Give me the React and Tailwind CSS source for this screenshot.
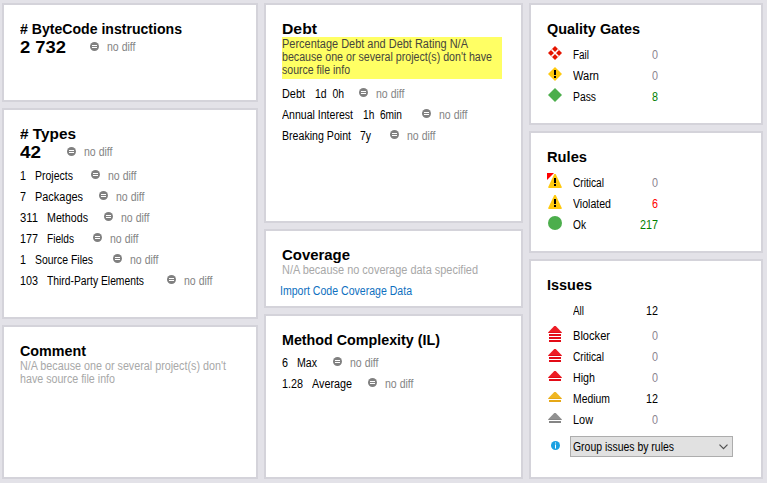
import { useLayoutEffect, useRef } from "react";

const body = "font-['Liberation_Sans',Arial,sans-serif] text-[12px]";

// Condenses or widens one line so that it fills the width of its cell.
function Fit({ className = "", children }) {
  const cell = useRef(null);
  const text = useRef(null);
  useLayoutEffect(() => {
    text.current.style.transform = "none";
    const room = cell.current.getBoundingClientRect().width;
    const natural = text.current.getBoundingClientRect().width;
    text.current.style.transform = `scaleX(${room / natural})`;
  }, [children]);
  return (
    <span ref={cell} className={`flex shrink-0 whitespace-pre ${className}`}>
      <span ref={text} className="block shrink-0 origin-left">{children}</span>
    </span>
  );
}

function Card({ title, titleWidth, className, children }) {
  return (
    <section className={`border-2 border-[#d4d3da] bg-white pl-4 pt-[14px] ${className}`}>
      <h2 className="h-[18px] text-[14.5px] font-bold leading-5 text-black">
        <Fit className={titleWidth}>{title}</Fit>
      </h2>
      {children}
    </section>
  );
}

function NoDiff({ className }) {
  return (
    <span className={`flex shrink-0 ${className}`}>
      <svg className="mt-[5px] h-[9px] w-[9px]" viewBox="0 0 9 9">
        <circle cx="4.5" cy="4.5" r="4.5" fill="#808080" />
        <path d="M2 3.5h5M2 5.5h5" stroke="#fff" />
      </svg>
      <Fit className={`ml-2 w-[28.5px] text-[#858585] ${body}`}>no diff</Fit>
    </span>
  );
}

function Metric({ first, firstClass, second, secondClass, diffClass }) {
  return (
    <div className={`flex h-[21px] leading-[23px] text-black ${body}`}>
      <Fit className={firstClass}>{first}</Fit>
      <Fit className={secondClass}>{second}</Fit>
      <NoDiff className={diffClass} />
    </div>
  );
}

function Total({ value, valueClass, diffClass }) {
  return (
    <div className="flex h-5 leading-5">
      <Fit className={`text-[16.5px] font-bold leading-[21px] text-black ${valueClass}`}>{value}</Fit>
      <NoDiff className={diffClass} />
    </div>
  );
}

function Status({ icon, label, labelClass, value, valueClass }) {
  return (
    <div className={`flex h-[21px] leading-[23px] text-black ${body}`}>
      <span className="w-[26px] shrink-0">{icon}</span>
      <span className="w-[66px] shrink-0">
        <Fit className={labelClass}>{label}</Fit>
      </span>
      <span className="flex w-[19px] shrink-0 justify-end">
        <Fit className={valueClass}>{value}</Fit>
      </span>
    </div>
  );
}

function Diamond({ kind }) {
  const fill = kind === "pass" ? "#4cae4c" : kind === "warn" ? "#ffc90e" : "#e51400";
  return (
    <svg className="ml-px mt-0.5 h-[14px] w-[14px]" viewBox="0 0 14 14">
      <path d="M7 0L14 7L7 14L0 7Z" fill={fill} />
      {kind === "fail" && (
        <path d="M3.5 3.5l7 7M10.5 3.5l-7 7" stroke="#fff" strokeWidth="1.6" />
      )}
      {kind === "warn" && <path d="M6 3h2v5h-2zM6 9h2v2h-2z" fill="#000" />}
    </svg>
  );
}

function Warning({ critical }) {
  return (
    <svg className="mt-px h-[15px] w-[15px]" viewBox="0 0 15 15">
      {critical && <path d="M0 0h7L0 7z" fill="#f00" />}
      <path d="M7.3 1h1.4L14.8 14q.2 1-.8 1H2q-1 0-.8-1z" fill="#ffc90e" />
      <path d="M7 5h2v5h-2zM7 11h2v2h-2z" fill="#000" />
    </svg>
  );
}

function Severity({ bars, className, fill, light }) {
  const height = 7 + bars * 3;
  return (
    <svg className={`w-[14px] ${className}`} height={height} viewBox={`0 0 14 ${height}`}>
      <path d="M6.3 0h1.4L13.5 6v1h-13v-1z" fill={light} />
      <path d="M0.5 6h13v1h-13z" fill={fill} />
      {Array.from({ length: bars }, (_, i) => (
        <rect key={i} x="1" y={8 + i * 3} width="12" height="2" fill={fill} />
      ))}
    </svg>
  );
}

const zero = "w-[6px] text-[#8c8490]";

export default function App() {
  return (
    <main className="flex h-[483px] w-[767px] gap-[6px] overflow-hidden bg-[#e3e2e8] pl-0.5 pt-[3px] font-['Liberation_Sans',Arial,sans-serif]">
      <div className="flex w-[256px] flex-col gap-[6px]">
        <Card title="# ByteCode instructions" titleWidth="w-[162px]" className="h-[99px]">
          <Total value="2 732" valueClass="w-[46px]" diffClass="ml-6" />
        </Card>
        <Card title="# Types" titleWidth="w-[56px]" className="h-[211px]">
          <Total value="42" valueClass="w-[21px]" diffClass="ml-[26px]" />
          <div className="mt-[3px]">
            <Metric first="1" firstClass="w-[6px]" second="Projects" secondClass="ml-[9px] w-[38px]" diffClass="ml-[18px]" />
            <Metric first="7" firstClass="w-[6px]" second="Packages" secondClass="ml-[9px] w-[48px]" diffClass="ml-4" />
            <Metric first="311" firstClass="w-[18px]" second="Methods" secondClass="ml-[9px] w-[41px]" diffClass="ml-4" />
            <Metric first="177" firstClass="w-[18px]" second="Fields" secondClass="ml-[9px] w-[27px]" diffClass="ml-[19px]" />
            <Metric first="1" firstClass="w-[6px]" second="Source Files" secondClass="ml-[9px] w-[58px]" diffClass="ml-5" />
            <Metric first="103" firstClass="w-[18px]" second="Third-Party Elements" secondClass="ml-[9px] w-[97px]" diffClass="ml-[23px]" />
          </div>
        </Card>
        <Card title="Comment" titleWidth="w-[66px]" className="h-[154px]">
          <div className={`pt-px leading-[13px] text-[#a8a8a8] ${body}`}>
            <Fit className="w-[206px]">N/A because one or several project(s) don't</Fit>
            <Fit className="w-[95px]">have source file info</Fit>
          </div>
        </Card>
      </div>

      <div className="flex w-[259px] flex-col gap-[6px]">
        <Card title="Debt" titleWidth="w-[35px]" className="h-[220px]">
          <div className={`h-[42px] w-[220px] bg-[#ffff64] pt-px leading-[13px] text-[#46463c] ${body}`}>
            <Fit className="w-[186px]">Percentage Debt and Debt Rating N/A</Fit>
            <Fit className="w-[210px]">because one or several project(s) don't have</Fit>
            <Fit className="w-[68px]">source file info</Fit>
          </div>
          <div className="mt-1">
            <Metric first="Debt" firstClass="w-[23px]" second="1d  0h" secondClass="ml-[10px] w-[29px]" diffClass="ml-[15px]" />
            <Metric first="Annual Interest" firstClass="w-[71px]" second="1h  6min" secondClass="ml-[10px] w-[39px]" diffClass="ml-5" />
            <Metric first="Breaking Point" firstClass="w-[69px]" second="7y" secondClass="ml-[9px] w-[11px]" diffClass="ml-[19px]" />
          </div>
        </Card>
        <Card title="Coverage" titleWidth="w-[68px]" className="h-[79px]">
          <div className={`h-[13px] pt-px leading-[13px] text-[#a8a8a8] ${body}`}>
            <Fit className="w-[196px]">N/A because no coverage data specified</Fit>
          </div>
          <a className={`-ml-0.5 mt-1 block h-[21px] leading-[23px] text-[#0e70c0] ${body}`}>
            <Fit className="w-[132px]">Import Code Coverage Data</Fit>
          </a>
        </Card>
        <Card title="Method Complexity (IL)" titleWidth="w-[158px]" className="h-[165px]">
          <div className="mt-1">
            <Metric first="6" firstClass="w-[6px]" second="Max" secondClass="ml-[9px] w-[20px]" diffClass="ml-4" />
            <Metric first="1.28" firstClass="w-[21px]" second="Average" secondClass="ml-[9px] w-[40px]" diffClass="ml-4" />
          </div>
        </Card>
      </div>

      <div className="flex w-[234px] flex-col gap-[6px]">
        <Card title="Quality Gates" titleWidth="w-[93px]" className="h-[122px]">
          <div className="mt-[7px]">
            <Status icon={<Diamond kind="fail" />} label="Fail" labelClass="w-[16px]" value="0" valueClass={zero} />
            <Status icon={<Diamond kind="warn" />} label="Warn" labelClass="w-[26px]" value="0" valueClass={zero} />
            <Status icon={<Diamond kind="pass" />} label="Pass" labelClass="w-[23px]" value="8" valueClass="w-[6px] text-[#008000]" />
          </div>
        </Card>
        <Card title="Rules" titleWidth="w-[40px]" className="h-[122px]">
          <div className="mt-[7px]">
            <Status icon={<Warning critical />} label="Critical" labelClass="w-[31px]" value="0" valueClass={zero} />
            <Status icon={<Warning />} label="Violated" labelClass="w-[38px]" value="6" valueClass="w-[6px] text-[#ff0000]" />
            <Status
              icon={
                <svg className="ml-px mt-0.5 h-[14px] w-[14px]" viewBox="0 0 14 14">
                  <circle cx="7" cy="7" r="7" fill="#4cae4c" />
                </svg>
              }
              label="Ok"
              labelClass="w-[13px]"
              value="217"
              valueClass="w-[18px] text-[#008000]"
            />
          </div>
        </Card>
        <Card title="Issues" titleWidth="w-[45px]" className="h-[220px]">
          <div className="mt-[7px]">
            <Status label="All" labelClass="w-[11px]" value="12" valueClass="w-[12px]" />
          </div>
          <div className="mt-1">
            <Status icon={<Severity bars={3} className="mt-px ml-px" fill="#e30b17" light="#ed1c24" />} label="Blocker" labelClass="w-[37px]" value="0" valueClass={zero} />
            <Status icon={<Severity bars={2} className="mt-[3px] ml-px" fill="#e30b17" light="#ed1c24" />} label="Critical" labelClass="w-[31px]" value="0" valueClass={zero} />
            <Status icon={<Severity bars={1} className="mt-1 ml-px" fill="#e30b17" light="#ed1c24" />} label="High" labelClass="w-[22px]" value="0" valueClass={zero} />
            <Status icon={<Severity bars={1} className="mt-1 ml-px" fill="#e6a817" light="#efb622" />} label="Medium" labelClass="w-[37px]" value="12" valueClass="w-[12px]" />
            <Status icon={<Severity bars={1} className="mt-1 ml-px" fill="#858585" light="#919191" />} label="Low" labelClass="w-[20px]" value="0" valueClass={zero} />
          </div>
          <div className={`mt-[6px] flex leading-[21px] text-black ${body}`}>
            <svg className="ml-1 mt-[5px] h-[9px] w-[9px]" viewBox="0 0 9 9">
              <circle cx="4.5" cy="4.5" r="4.5" fill="#1ba1e2" />
              <path d="M4 1.5h1v1H4zM4 3.5h1v4H4z" fill="#fff" />
            </svg>
            <button className="ml-[10px] flex h-[21px] w-[163px] items-start justify-between border border-[#adadad] bg-[#e1e1e1] pl-[2px] pr-[4px]">
              <Fit className="w-[101px] text-left">Group issues by rules</Fit>
              <svg className="mt-[7px] h-[6px] w-[9px]" viewBox="0 0 9 6">
                <path d="M0.5 0.7l4 4 4-4" fill="none" stroke="#505050" strokeWidth="1.2" />
              </svg>
            </button>
          </div>
        </Card>
      </div>
    </main>
  );
}
